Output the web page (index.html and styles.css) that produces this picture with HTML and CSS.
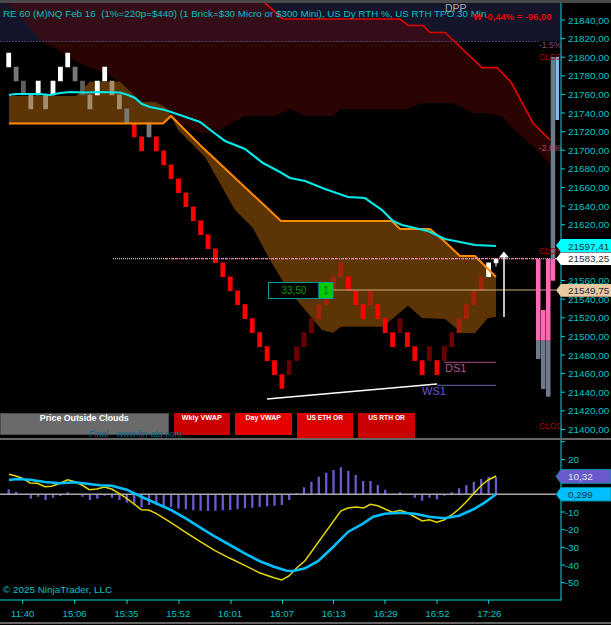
FILE: index.html
```html
<!DOCTYPE html>
<html lang="en">
<head>
<meta charset="utf-8">
<title>NQ Renko chart</title>
<link rel="stylesheet" href="styles.css">
</head>
<body>
<main class="chart">
  <div class="bar-top"></div>
  <section class="price-panel">
    <svg class="price-svg" viewBox="0 3 611 435" width="611" height="435">
      <rect class="band" x="0" y="3" width="561" height="38"/>
      <polygon class="red-cloud" points="7,3 265,3 283,19 400,19 408,25.5 423,25.5 430,32.5 445,32.5 482,67.7 497,67.7 511,82 533,123 550,140 550,165 535,148 512,128 503,117 488,113 473,113 452,103 422,103 407,109 341,109 333,116 305,116 290,109 275,116 245,116 213,133 200,133 190,128 140,103 123,83 103,72 78,63 70,57 42,41 20,17"/>
      <line class="band-line" x1="0" y1="41.5" x2="540" y2="41.5"/>
      <polyline class="red-line" points="265,3 283,19 400,19 408,25.5 423,25.5 430,32.5 445,32.5 482,67.7 497,67.7 511,82 533,123 550,140"/>
      <polygon class="brown-cloud" points="9,96 76,96 90,81.5 120,81.5 135,96 141,102 155,102 165,107 171,116 200,145 281,221 392,221 400,229 430,229 443,240 460,256 475,256 496,277 496,317 488,318 475,333 462,333 445,319 422,318 408,305.7 383,326.7 341,326.7 333,333 322,330 305,310 287,288 270,260 253,228 235,210 205,157 178,130 171,116 163,123.5 9,123.5"/>

      <path class="brick b-white" d="M8.7 52.7v14.6M38.2 80.7v14.6M53 80.7v14.6M60.4 66.7v14.6M67.7 52.7v14.6M97.3 80.7v14.6M104.7 66.7v14.6M488.6 262.4v14.6"/>
      <path class="brick b-gray" d="M16.1 66.7v14.6M75.1 66.7v14.6M126.8 108.6v14.6M149 122.6v14.6"/>
      <path class="brick b-dim" d="M23.4 80.7v14.6M82.5 80.7v14.6"/>
      <path class="brick b-tan" d="M30.8 94.6v14.6M45.6 94.6v14.6M89.9 94.6v14.6M112 80.7v14.6M119.4 94.6v14.6"/>
      <path class="brick b-red" d="M134.2 122.6v14.6M141.6 136.6v14.6M156.3 136.6v14.6M163.7 150.6v14.6M171.1 164.5v14.6M178.5 178.5v14.6M185.9 192.5v14.6M193.3 206.5v14.6M200.6 220.5v14.6M208 234.4v14.6M215.4 248.4v14.6M222.8 262.4v14.6M230.2 276.4v14.6M237.6 290.4v14.6M245 304.3v14.6M252.3 318.3v14.6M259.7 332.3v14.6M267.1 346.3v14.6M274.5 360.3v14.6M281.9 374.2v14.6M348.3 276.4v14.6M355.7 290.4v14.6M363.1 304.3v14.6M377.8 304.3v14.6M385.2 318.3v14.6M392.6 332.3v14.6M407.4 332.3v14.6M414.8 346.3v14.6M422.1 360.3v14.6M436.9 360.3v14.6"/>
      <path class="brick b-maroon" d="M289.2 360.3v14.6M296.6 346.3v14.6M304 332.3v14.6M311.4 318.3v14.6M400 318.3v14.6M429.5 346.3v14.6M444.3 346.3v14.6M451.7 332.3v14.6"/>
      <path class="brick b-rust" d="M318.8 304.3v14.6M326.2 290.4v14.6M333.5 276.4v14.6M340.9 262.4v14.6M370.5 290.4v14.6M459.1 318.3v14.6M466.4 304.3v14.6M473.8 290.4v14.6M481.2 276.4v14.6"/>
      <path class="wick" d="M496 263v3.5"/>
      <rect class="b-body" x="493.8" y="258.7" width="4.6" height="4.5"/>

      <polyline class="orange-line" points="9,123.5 163,123.5 171,116 200,145 281,221 392,221 400,229 430,229 443,240 460,256 475,256 496,277"/>
      <polyline class="cyan-line" points="9,95 15,94 40,94 50,95 60,93 70,92 85,92.5 100,92 120,92.5 128,95 135,98 142,104 150,107 165,110 180,115 200,122 213,132 225,141 245,149 263,163 280,172 290,178 305,181 325,189 348,197 365,198 382,210 393,221 402,225 428,231 445,239 475,245 496,246"/>

      <line class="dot-gray" x1="113" y1="258.7" x2="561" y2="258.7"/>
      <line class="dot-pink" x1="166" y1="258.7" x2="540" y2="258.7"/>
      <line class="tan-line" x1="333" y1="290" x2="556" y2="290"/>

      <rect class="box" x="268.5" y="282.5" width="50.5" height="16"/>
      <text class="box-num" x="294" y="294">33,50</text>
      <rect class="box-go" x="319" y="282.5" width="14" height="16"/>
      <text class="box-one" x="326" y="294">1</text>

      <line class="arrow-shaft" x1="504" y1="257" x2="504" y2="317"/>
      <polygon class="arrow-head" points="503.8,251.5 509,257.5 499,257.5"/>

      <line class="ds-line" x1="444" y1="362.3" x2="496" y2="362.3"/>
      <text class="ds-text" x="445" y="372">DS1</text>
      <line class="ws-line" x1="437" y1="385.3" x2="496" y2="385.3"/>
      <text class="ws-text" x="422" y="395">WS1</text>
      <line class="trend" x1="267" y1="399" x2="437" y2="384"/>

      <rect class="b-pink" x="536" y="258.7" width="4.5" height="82"/>
      <rect class="b-steel" x="536" y="340.7" width="4.5" height="18.3"/>
      <rect class="b-pink" x="541" y="310" width="4.5" height="30.7"/>
      <rect class="b-steel" x="541" y="340.7" width="4.5" height="48.3"/>
      <rect class="b-pink" x="546" y="258.7" width="4.5" height="82"/>
      <rect class="b-steel" x="546" y="340.7" width="4.5" height="56"/>
      <rect class="b-pink" x="550.7" y="258.7" width="4.5" height="22"/>
      <rect class="b-steel" x="550.7" y="57" width="4.5" height="201.7"/>
      <rect class="b-sky" x="555.5" y="57" width="3.5" height="63"/>

      <text class="tiny t-purple" x="539" y="48">-1.5%</text>
      <text class="tiny t-red" x="539" y="59.5">CLOS</text>
      <text class="tiny t-rose" x="539" y="151">-2.0%</text>
      <text class="tiny t-red" x="539" y="254">CLOS</text>
      <text class="tiny t-red" x="539" y="429">CLOS</text>

      <text class="title" x="3" y="16.5">RE 60 (M)NQ Feb 16  (1%=220p=$440) (1 Brick=$30 Micro or $300 Mini), US Dy RTH %, US RTH TPO 30 Min</text>
      <text class="dpp" x="445" y="12">DPP</text>
      <text class="pnl" x="473" y="20">W -0,44% = -96,00</text>

      <line class="axis" x1="561" y1="3" x2="561" y2="438"/>
      <path class="axis-ticks" d="M561 20h4M561 38.6h4M561 57.2h4M561 75.8h4M561 94.4h4M561 113h4M561 131.7h4M561 150.3h4M561 168.9h4M561 187.5h4M561 206.1h4M561 224.7h4M561 243.3h4M561 261.9h4M561 280.5h4M561 299.2h4M561 317.8h4M561 336.4h4M561 355h4M561 373.6h4M561 392.2h4M561 410.8h4M561 429.5h4"/>
      <g class="axis-labels">
        <text x="568" y="23.5">21840,00</text>
        <text x="568" y="42.1">21820,00</text>
        <text x="568" y="60.7">21800,00</text>
        <text x="568" y="79.3">21780,00</text>
        <text x="568" y="97.9">21760,00</text>
        <text x="568" y="116.5">21740,00</text>
        <text x="568" y="135.2">21720,00</text>
        <text x="568" y="153.8">21700,00</text>
        <text x="568" y="172.4">21680,00</text>
        <text x="568" y="191">21660,00</text>
        <text x="568" y="209.6">21640,00</text>
        <text x="568" y="228.2">21620,00</text>
        <text x="568" y="284">21560,00</text>
        <text x="568" y="302.7">21540,00</text>
        <text x="568" y="321.3">21520,00</text>
        <text x="568" y="339.9">21500,00</text>
        <text x="568" y="358.5">21480,00</text>
        <text x="568" y="377.1">21460,00</text>
        <text x="568" y="395.7">21440,00</text>
        <text x="568" y="414.3">21420,00</text>
        <text x="568" y="433">21400,00</text>
      </g>
      <polygon class="tag-cyan" points="556,245.5 561,239 611,239 611,252 561,252"/>
      <text class="tag-text" x="568" y="250">21597,41</text>
      <polygon class="tag-white" points="556,258.7 561,252.5 611,252.5 611,265 561,265"/>
      <text class="tag-text" x="568" y="262.3">21583,25</text>
      <polygon class="tag-tan" points="556,290.3 561,284 611,284 611,296.7 561,296.7"/>
      <text class="tag-text" x="568" y="294">21549,75</text>
    </svg>
    <div class="signal-row">
      <div class="signal signal-wide">Price Outside Clouds</div>
      <div class="signal signal-short signal-dark">Wkly VWAP</div>
      <div class="signal signal-short signal-bright signal-day">Day VWAP</div>
      <div class="signal signal-tall signal-mid">US ETH OR</div>
      <div class="signal signal-tall signal-dark">US RTH OR</div>
    </div>
    <div class="credit">Final - www.fin-alg.com</div>
  </section>
  <div class="rule"></div>
  <section class="macd-panel">
    <svg class="macd-svg" viewBox="0 440 611 164" width="611" height="164">
      <path class="hist" d="M8.7 494V489.3M16.1 494V491.7M30.8 494V498.7M38.2 494V496.7M45.6 494V500M53 494V497.7M60.4 494V496M67.7 494V492.3M75.1 494V495M82.5 494V496.7M89.9 494V500M97.3 494V498.7M104.7 494V495.7M112 494V497.7M119.4 494V500M126.8 494V502.7M134.2 494V505M141.6 494V507M149 494V505M156.3 494V505M163.7 494V506M171.1 494V507M178.5 494V508.7M185.9 494V509.3M193.3 494V510.3M200.6 494V510.7M208 494V510.7M215.4 494V510.7M222.8 494V510.3M230.2 494V510M237.6 494V509.3M245 494V508.3M252.3 494V507.7M259.7 494V507M267.1 494V506.3M274.5 494V505.7M281.9 494V505M289.2 494V500M296.6 494V493M304 494V487.3M311.4 494V481.7M318.8 494V476.7M326.2 494V472.7M333.5 494V470M340.9 494V467.3M348.3 494V470.7M355.7 494V475M363.1 494V481M370.5 494V481M377.8 494V485M385.2 494V489.7M392.6 494V493.7M400 494V492.3M414.8 494V497.7M422.1 494V500.7M429.5 494V497.7M436.9 494V499.3M444.3 494V495.7M451.7 494V492.3M459.1 494V488.3M466.4 494V485M473.8 494V481.7M481.2 494V479M488.6 494V477M496 494V477"/>
      <line class="zero" x1="0" y1="494.3" x2="556" y2="494.3"/>
      <polyline class="signal-line" points="9,474.3 16.7,476.3 23.3,478.7 30,483 37.3,483.3 45,486.7 51.7,486.3 60,483.3 67.7,479.7 75,481.7 82,485 89.3,489.7 97,489 104.3,487 111.7,489 119,493.3 126.7,498.3 134,504 141.3,509.7 148.7,510 156,513.3 171,522.7 185.7,532.3 200.3,541.7 215,550.7 230,558.3 244.7,565.3 259.3,572.7 274,577.7 281.7,580 289,576 296.3,568.3 305,560.7 340.7,511 348,508 355.7,507 363.7,508 370.3,504.3 377.7,505.7 385,509 392.3,512.3 400,510.3 407.3,512.7 415,517 422.3,521 429.3,519.7 436.7,522.3 444,520 451.7,515 459,509 466.3,501.7 474,493.3 481.7,485 488.3,480 496,476"/>
      <polyline class="macd-line" points="9,480 16.7,479 30,479.7 45,482 60,483.3 75,482.3 89.3,484 100,485.3 111.7,485.7 126.7,489.7 141.3,496.7 156,503.3 171,510 185.7,518.3 200.3,527.7 215,536.7 230,545 244.7,553.3 259.3,561 274,566.7 286.7,570.7 293.3,571 305,568.3 318.3,561 333.3,546.7 348.3,531.7 361.7,524.3 373.3,516.7 385,513.7 400,512.7 415,513.7 429.3,516.7 444,518.3 459,515.7 474,509 485,502.3 496,494.3"/>
      <text class="copyright" x="3" y="592.5">© 2025 NinjaTrader, LLC</text>
      <line class="axis" x1="561" y1="440" x2="561" y2="600.5"/>
      <line class="axis" x1="0" y1="600" x2="561" y2="600"/>
      <path class="axis-ticks" d="M561 441.7h4M561 459.5h4M561 512h4M561 529.7h4M561 547.3h4M561 565h4M561 582.7h4M22.7 600v4M74.7 600v4M127 600v4M179 600v4M231 600v4M282.5 600v4M333.5 600v4M385 600v4M437 600v4M488.7 600v4"/>
      <g class="axis-labels axis-right">
        <text x="579" y="463">20</text>
        <text x="579" y="515.5">-10</text>
        <text x="579" y="533.2">-20</text>
        <text x="579" y="550.8">-30</text>
        <text x="579" y="568.5">-40</text>
        <text x="579" y="586.2">-50</text>
      </g>
      <polygon class="tag-violet" points="556,476.5 561,469.5 611,469.5 611,483.3 561,483.3"/>
      <text class="tag-text tag-light" x="568" y="480">10,32</text>
      <polygon class="tag-sky" points="556,494.3 561,487.5 611,487.5 611,501 561,501"/>
      <text class="tag-text" x="568" y="498">0,299</text>
    </svg>
  </section>
  <div class="time-row">
    <span>11:40</span><span>15:06</span><span>15:35</span><span>15:52</span><span>16:01</span><span>16:07</span><span>16:13</span><span>16:29</span><span>16:52</span><span>17:26</span>
  </div>
  <div class="rule"></div>
</main>
</body>
</html>
```

FILE: styles.css
```css
html, body {
  margin: 0;
  padding: 0;
  background: #000;
}
.chart {
  width: 611px;
  height: 625px;
  overflow: hidden;
  display: flex;
  flex-direction: column;
  background: #000;
  font-family: "Liberation Sans", Arial, sans-serif;
}
svg {
  display: block;
  font-family: "Liberation Sans", Arial, sans-serif;
}
.bar-top {
  height: 3px;
  flex: none;
  background: #4a4a4a;
}
.price-panel {
  position: relative;
  height: 435px;
  flex: none;
}
.rule {
  height: 2px;
  flex: none;
  background: #666;
}
.macd-panel {
  height: 164px;
  flex: none;
}

.band { fill: #14142a; }
.red-cloud { fill: rgba(84, 6, 6, .5); }
.band-line { stroke: #4d3b6e; stroke-width: 1; stroke-dasharray: 2 1; }
.red-line { fill: none; stroke: #e00000; stroke-width: 1.7; }
.brown-cloud { fill: #5c3406; }

.brick { fill: none; stroke-width: 4.8; }
.b-white { stroke: #fff; }
.b-gray { stroke: #787878; }
.b-dim { stroke: #5e5e5e; }
.b-tan { stroke: #a48c6c; }
.b-red { stroke: #ff0000; }
.b-maroon { stroke: #6a0000; }
.b-rust { stroke: #a52208; }
.b-body { fill: #fff; }
.wick { fill: none; stroke: #fff; stroke-width: 1; }

.orange-line { fill: none; stroke: #ff8c00; stroke-width: 2; }
.cyan-line { fill: none; stroke: #00eaea; stroke-width: 2.2; }

.dot-gray { stroke: #c8c8c8; stroke-width: 1.2; stroke-dasharray: 1 1; }
.dot-pink { stroke: #ff69b4; stroke-width: 1.2; stroke-dasharray: 2 3; }
.tan-line { stroke: #c9a878; stroke-opacity: .7; stroke-width: 1.5; }

.box { fill: #000; stroke: #009c9c; stroke-width: 1; }
.box-go { fill: #00cc00; stroke: #009c9c; stroke-width: 1; }
.box-num { fill: #0c9a0c; font-size: 10px; text-anchor: middle; }
.box-one { fill: #063; font-size: 10px; text-anchor: middle; }

.arrow-shaft { stroke: #fff; stroke-width: 1.5; }
.arrow-head { fill: #fff; }

.ds-line { stroke: #8a3a6a; stroke-width: 1.2; }
.ds-text { fill: #b8508c; font-size: 11px; }
.ws-line { stroke: #544e8a; stroke-width: 1.2; }
.ws-text { fill: #6a5acd; font-size: 11px; }
.trend { stroke: #fff; stroke-width: 1.5; }

.b-pink { fill: #ff69b4; }
.b-steel { fill: #6c7a8c; }
.b-sky { fill: #7cbcf0; }

.tiny { font-size: 8.5px; }
.t-purple { fill: #8a4a78; }
.t-red { fill: #b00000; }
.t-rose { fill: #b8506e; }

.title {
  fill: #00c4c4;
  font-size: 9.82px;
  white-space: pre;
}
.dpp { fill: #aaa; font-size: 10.5px; }
.pnl { fill: #e60000; font-size: 9.4px; font-weight: 700; }

.axis { stroke: #00d8d8; stroke-width: 1; }
.axis-ticks { fill: none; stroke: #00d8d8; stroke-width: 1; }
.axis-labels { fill: #00c4c4; font-size: 9.9px; }
.axis-right { text-anchor: end; }

.tag-cyan { fill: #00ffff; }
.tag-white { fill: #fff; }
.tag-tan { fill: #e8c8a0; }
.tag-violet { fill: #6a5acd; stroke: #008c9c; stroke-width: 1; }
.tag-sky { fill: #00bfff; stroke: #008c9c; stroke-width: 1; }
.tag-text { fill: #22303a; font-size: 9.9px; }
.tag-light { fill: #e0e0e0; }

.signal-row {
  position: absolute;
  left: 0;
  top: 410px;
  display: flex;
  align-items: flex-start;
  gap: 5px;
}
.signal {
  box-sizing: border-box;
  color: #fff;
  font-weight: 700;
  text-align: center;
  white-space: nowrap;
}
.signal-wide {
  width: 168.5px;
  height: 22px;
  background: #6a6a6a;
  border: 1px solid #4c4c4c;
  font-size: 8.8px;
  line-height: 9px;
}
.signal-short {
  width: 56.5px;
  height: 22px;
  font-size: 7.2px;
  line-height: 9px;
}
.signal-day { font-size: 7px; }
.signal-tall {
  width: 56.7px;
  height: 25px;
  font-size: 6.7px;
  line-height: 9px;
}
.signal-dark { background: #c80000; }
.signal-bright { background: #e60000; }
.signal-mid { background: #dc0000; }

.credit {
  position: absolute;
  left: 89px;
  top: 426.5px;
  height: 8.5px;
  overflow: hidden;
  color: #00688a;
  font-size: 9px;
  line-height: 9px;
  white-space: nowrap;
}

.hist { fill: none; stroke: #6a5acd; stroke-width: 2.3; }
.zero { stroke: #a8a8a8; stroke-width: 1.4; }
.signal-line { fill: none; stroke: #e4d800; stroke-width: 1.5; }
.macd-line { fill: none; stroke: #00bfff; stroke-width: 2.6; }
.copyright { fill: #00c4c4; font-size: 9.9px; }

.time-row {
  height: 18px;
  flex: none;
  display: grid;
  grid-template-columns: repeat(10, 51.85px);
  margin-left: -3.2px;
  align-items: center;
  color: #00c4c4;
  font-size: 9.6px;
  text-align: center;
}
```
